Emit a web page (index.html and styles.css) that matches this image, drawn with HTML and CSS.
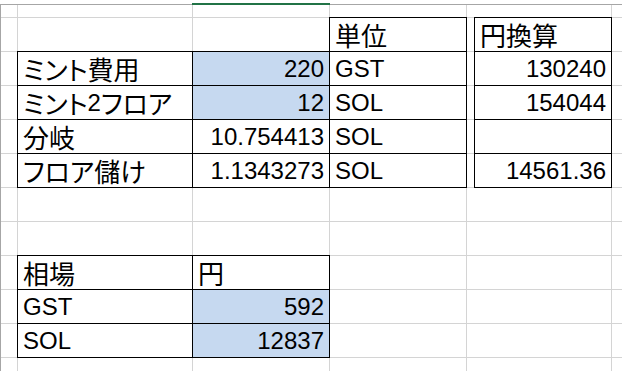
FILE: index.html
```html
<!DOCTYPE html>
<html lang="ja">
<head>
<meta charset="utf-8">
<title>ミント収支</title>
<link rel="stylesheet" href="styles.css">
</head>
<body>
<div class="sheet">
  <div class="col-mark"></div>
  <div class="grid">
    <!-- row 0 (partially scrolled) -->
    <div class="c"></div><div class="c"></div><div class="c"></div><div class="c"></div><div class="c"></div><div class="c"></div><div class="c"></div>
    <!-- row 1: headers -->
    <div class="c"></div><div class="c"></div><div class="c"></div>
    <div class="c b"><span class="jp">単位</span></div>
    <div class="c"></div>
    <div class="c b"><span class="jp">円換算</span></div>
    <div class="c"></div>
    <!-- row 2 -->
    <div class="c"></div>
    <div class="c b"><span class="jp">ミント費用</span></div>
    <div class="c b fill r">220</div>
    <div class="c b">GST</div>
    <div class="c"></div>
    <div class="c b r">130240</div>
    <div class="c"></div>
    <!-- row 3 -->
    <div class="c"></div>
    <div class="c b"><span class="jp">ミント</span>2<span class="jp">フロア</span></div>
    <div class="c b fill r">12</div>
    <div class="c b">SOL</div>
    <div class="c"></div>
    <div class="c b r">154044</div>
    <div class="c"></div>
    <!-- row 4 -->
    <div class="c"></div>
    <div class="c b"><span class="jp">分岐</span></div>
    <div class="c b r">10.754413</div>
    <div class="c b">SOL</div>
    <div class="c"></div>
    <div class="c b r"></div>
    <div class="c"></div>
    <!-- row 5 -->
    <div class="c"></div>
    <div class="c b"><span class="jp">フロア儲け</span></div>
    <div class="c b r">1.1343273</div>
    <div class="c b">SOL</div>
    <div class="c"></div>
    <div class="c b r">14561.36</div>
    <div class="c"></div>
    <!-- rows 6-7: empty -->
    <div class="c"></div><div class="c"></div><div class="c"></div><div class="c"></div><div class="c"></div><div class="c"></div><div class="c"></div>
    <div class="c"></div><div class="c"></div><div class="c"></div><div class="c"></div><div class="c"></div><div class="c"></div><div class="c"></div>
    <!-- row 8: rate table header -->
    <div class="c"></div>
    <div class="c b"><span class="jp">相場</span></div>
    <div class="c b"><span class="jp">円</span></div>
    <div class="c"></div><div class="c"></div><div class="c"></div><div class="c"></div>
    <!-- row 9 -->
    <div class="c"></div>
    <div class="c b">GST</div>
    <div class="c b fill r">592</div>
    <div class="c"></div><div class="c"></div><div class="c"></div><div class="c"></div>
    <!-- row 10 -->
    <div class="c"></div>
    <div class="c b">SOL</div>
    <div class="c b fill r">12837</div>
    <div class="c"></div><div class="c"></div><div class="c"></div><div class="c"></div>
    <!-- row 11 (cut off) -->
    <div class="c"></div><div class="c"></div><div class="c"></div><div class="c"></div><div class="c"></div><div class="c"></div><div class="c"></div>
  </div>
</div>
</body>
</html>
```
FILE: styles.css
```css
html, body {
  margin: 0;
  padding: 0;
  background: #fff;
}

.sheet {
  position: relative;
  width: 622px;
  height: 371px;
  overflow: hidden;
  padding-top: 4px;
  box-sizing: border-box;
}

/* green edge of the selected column, drawn over the top gridline */
.col-mark {
  position: absolute;
  left: 192px;
  top: 3px;
  width: 138px;
  height: 2px;
  background: #217346;
  z-index: 2;
}

.grid {
  display: grid;
  grid-template-columns: 16px 174px 136px 136px 7px 136px 10px;
  grid-template-rows: 12px repeat(10, 33px) 13px;
  gap: 1px;
  background: #d4d4d4;
  border-top: 1px solid #a6a6a6;
  border-left: 1px solid #a6a6a6;
  font-family: "Liberation Sans", "Noto Sans CJK JP", sans-serif;
  font-size: 24px;
  color: #000;
}

.c {
  background: #fff;
  display: flex;
  align-items: flex-end;
  justify-content: flex-start;
  padding: 0 5px 3px 5px;
  line-height: 26px;
  white-space: nowrap;
  overflow: visible;
  min-width: 0;
}

/* thin black cell border, painted onto the surrounding gridlines */
.b {
  outline: 1px solid #000;
}

.fill {
  background: #c6d9f0;
}

.r {
  justify-content: flex-end;
}

.jp {
  font-family: "Noto Sans CJK JP", sans-serif;
  font-size: 26px;
  font-feature-settings: "palt";
  vertical-align: 2px;
}
```
